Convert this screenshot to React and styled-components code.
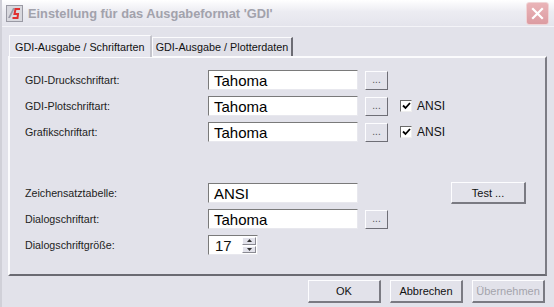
import styled, { createGlobalStyle } from 'styled-components'

const GlobalStyle = createGlobalStyle`
  html, body {
    margin: 0;
    padding: 0;
    background: #e2e2ea;
  }
`

const ui = `"Liberation Sans", "DejaVu Sans", Arial, sans-serif`

const Window = styled.div`
  width: 554px;
  height: 307px;
  display: flex;
  flex-direction: column;
  background: #e2e2ea;
  font-family: ${ui};
  font-size: 11px;
  color: #111;
  box-sizing: border-box;
  border-left: 2px solid #d0d0d8;
  overflow: hidden;
`

const TitleBar = styled.div`
  height: 26px;
  flex: none;
  display: flex;
  align-items: center;
  padding: 0 5px 0 4px;
  gap: 5px;
  background: linear-gradient(#ffffff, #ececf2 45%, #e4e4ec);
  border-bottom: 1px solid #f4f4f8;
`

const TitleText = styled.div`
  flex: 1;
  font-weight: bold;
  font-size: 12.8px;
  color: #a2a2ac;
`

const CloseButton = styled.div`
  width: 21px;
  height: 21px;
  border-radius: 3px;
  background: linear-gradient(#eab4b8, #dc9ca2);
  border: 1px solid #f0d4d6;
  display: flex;
  align-items: center;
  justify-content: center;
`

const Content = styled.div`
  display: flex;
  flex-direction: column;
  padding: 7px 7px 0 6px;
`

const TabStrip = styled.div`
  display: flex;
  align-items: flex-end;
  height: 22px;
  padding-left: 1px;
`

const Tab = styled.div`
  height: ${p => (p.$active ? 22 : 19)}px;
  box-sizing: border-box;
  padding: 0 ${p => (p.$active ? 5 : 3)}px;
  display: flex;
  align-items: center;
  background: ${p => (p.$active ? '#e6e6ee' : '#e0e0e8')};
  border: 1px solid #fbfbfd;
  border-bottom: none;
  border-right: 2px solid ${p => (p.$active ? '#c4c4cc' : '#6c6c74')};
  font-size: 10.8px;
  position: relative;
  z-index: ${p => (p.$active ? 1 : 0)};
  margin-bottom: ${p => (p.$active ? -1 : 0)}px;
`

const TabPanel = styled.div`
  height: 220px;
  box-sizing: border-box;
  width: 539px;
  border-top: 2px solid #fbfbfd;
  border-left: 2px solid #fbfbfd;
  border-right: 2px solid #7c7c84;
  border-bottom: 2px solid #6a6a72;
  padding: 12px 0 0 15px;
  display: flex;
  flex-direction: column;
`

const Group = styled.div`
  display: flex;
  flex-direction: column;
  gap: 6px;
  margin-bottom: ${p => p.$gap || 0}px;
`

const Row = styled.div`
  display: flex;
  align-items: center;
  height: 20px;
`

const Label = styled.div`
  width: 183px;
  flex: none;
  font-size: 10.7px;
  color: #222;
`

const TextBox = styled.div`
  width: ${p => p.$w || 150}px;
  height: 20px;
  box-sizing: border-box;
  background: #fff;
  border-top: 1px solid #7a7a7a;
  border-left: 1px solid #7a7a7a;
  border-right: 1px solid #e8e8ee;
  border-bottom: 1px solid #e8e8ee;
  padding-left: 5px;
  font-size: 15px;
  display: flex;
  align-items: center;
  color: #000;
`

const SmallButton = styled.div`
  width: 23px;
  height: 19px;
  margin-left: 7px;
  box-sizing: border-box;
  border: 1px solid #fdfdff;
  border-right-color: #6e6e76;
  border-bottom-color: #6e6e76;
  background: #e2e2ea;
  display: flex;
  align-items: flex-end;
  justify-content: center;
  padding-bottom: 4px;
  font-size: 10px;
  color: #555;
  line-height: 1;
`

const CheckLabel = styled.div`
  display: flex;
  align-items: center;
  margin-left: 12px;
  gap: 5px;
  font-size: 12px;
`

const CheckBox = styled.div`
  width: 12px;
  height: 12px;
  box-sizing: border-box;
  background: #fff;
  border-top: 1px solid #6a6a6a;
  border-left: 1px solid #6a6a6a;
  border-right: 1px solid #eee;
  border-bottom: 1px solid #eee;
  display: flex;
  align-items: center;
  justify-content: center;
`

const TestButton = styled.div`
  margin-left: 93px;
  width: 75px;
  height: 22px;
  box-sizing: border-box;
  border: 1px solid #fdfdff;
  border-right: 2px solid #7a7a82;
  border-bottom: 2px solid #7a7a82;
  display: flex;
  align-items: center;
  justify-content: center;
  font-size: 11px;
`

const Spinner = styled.div`
  width: 50px;
  height: 20px;
  box-sizing: border-box;
  background: #fff;
  border-top: 1px solid #7a7a7a;
  border-left: 1px solid #7a7a7a;
  border-right: 1px solid #e8e8ee;
  border-bottom: 1px solid #e8e8ee;
  display: flex;
  align-items: center;
  padding-left: 6px;
  font-size: 15px;
`

const SpinValue = styled.div`
  flex: 1;
`

const SpinArrows = styled.div`
  width: 14px;
  height: 16px;
  margin-right: 1px;
  display: flex;
  flex-direction: column;
  gap: 1px;
`

const SpinHalf = styled.div`
  flex: 1;
  background: #e2e2ea;
  border: 1px solid #fdfdff;
  border-right-color: #8a8a92;
  border-bottom-color: #8a8a92;
  display: flex;
  align-items: center;
  justify-content: center;
`

const ButtonRow = styled.div`
  display: flex;
  justify-content: flex-end;
  gap: 9px;
  padding: 4px 9px 0 0;
`

const DialogButton = styled.div`
  width: 73px;
  height: 23px;
  box-sizing: border-box;
  border: 1px solid #fdfdff;
  border-right: 2px solid #7a7a82;
  border-bottom: 2px solid #7a7a82;
  display: flex;
  align-items: center;
  justify-content: center;
  font-size: 11px;
  color: ${p => (p.$disabled ? '#a4a4ac' : '#111')};
`

const AppIcon = () => (
  <svg width="17" height="17" viewBox="0 0 17 17">
    <rect x="0.5" y="0.5" width="16" height="16" fill="#d8d8de" stroke="#9a9aa4" />
    <path d="M2 13 L7 3 L9 3 L4 13 Z" fill="#9a9aa8" />
    <path d="M14 4 H9.5 L8.5 9 H12 L11.5 13 H6.5" fill="none" stroke="#e03030" strokeWidth="2" />
  </svg>
)

const CloseIcon = () => (
  <svg width="13" height="13" viewBox="0 0 13 13">
    <path d="M2 2 L11 11 M11 2 L2 11" stroke="#fff" strokeWidth="2.2" strokeLinecap="square" />
  </svg>
)

const CheckMark = () => (
  <svg width="9" height="8" viewBox="0 0 9 8">
    <path d="M1 3.5 L3.5 6 L8 1" fill="none" stroke="#000" strokeWidth="1.8" />
  </svg>
)

const Arrow = ({ up }) => (
  <svg width="5" height="3" viewBox="0 0 5 3">
    <path d={up ? 'M0 3 L2.5 0 L5 3 Z' : 'M0 0 L2.5 3 L5 0 Z'} fill="#333" />
  </svg>
)

const FontRow = ({ label, value, ansi }) => (
  <Row>
    <Label>{label}</Label>
    <TextBox>{value}</TextBox>
    <SmallButton>...</SmallButton>
    {ansi && (
      <CheckLabel>
        <CheckBox>
          <CheckMark />
        </CheckBox>
        ANSI
      </CheckLabel>
    )}
  </Row>
)

const App = () => {
  return (
    <>
      <GlobalStyle />
      <Window>
        <TitleBar>
          <AppIcon />
          <TitleText>Einstellung für das Ausgabeformat 'GDI'</TitleText>
          <CloseButton>
            <CloseIcon />
          </CloseButton>
        </TitleBar>

        <Content>
          <TabStrip>
            <Tab $active>GDI-Ausgabe / Schriftarten</Tab>
            <Tab>GDI-Ausgabe / Plotterdaten</Tab>
          </TabStrip>

          <TabPanel>
            <Group $gap={41}>
              <FontRow label="GDI-Druckschriftart:" value="Tahoma" />
              <FontRow label="GDI-Plotschriftart:" value="Tahoma" ansi />
              <FontRow label="Grafikschriftart:" value="Tahoma" ansi />
            </Group>

            <Group>
              <Row>
                <Label>Zeichensatztabelle:</Label>
                <TextBox>ANSI</TextBox>
                <TestButton>Test ...</TestButton>
              </Row>
              <FontRow label="Dialogschriftart:" value="Tahoma" />
              <Row>
                <Label>Dialogschriftgröße:</Label>
                <Spinner>
                  <SpinValue>17</SpinValue>
                  <SpinArrows>
                    <SpinHalf>
                      <Arrow up />
                    </SpinHalf>
                    <SpinHalf>
                      <Arrow />
                    </SpinHalf>
                  </SpinArrows>
                </Spinner>
              </Row>
            </Group>
          </TabPanel>
        </Content>

        <ButtonRow>
          <DialogButton>OK</DialogButton>
          <DialogButton>Abbrechen</DialogButton>
          <DialogButton $disabled>Übernehmen</DialogButton>
        </ButtonRow>
      </Window>
    </>
  )
}

export default App
